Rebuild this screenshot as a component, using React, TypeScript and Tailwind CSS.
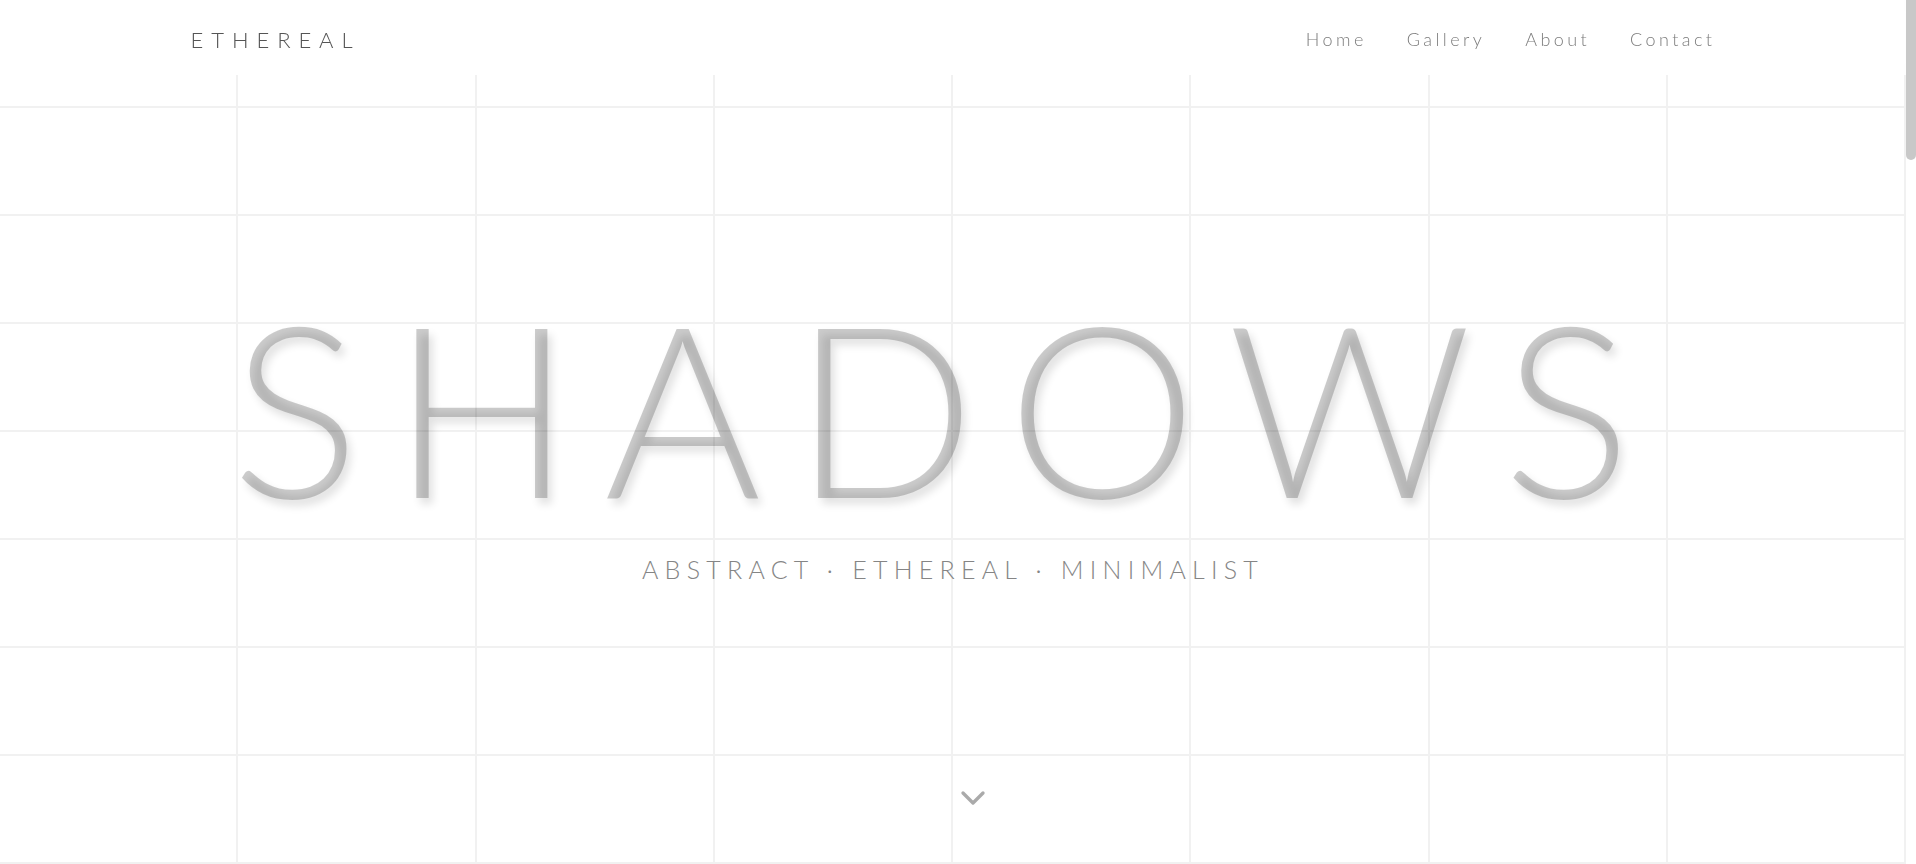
import { ChevronDown } from "lucide-react";

const navItems = ["Home", "Gallery", "About", "Contact"];

function GridLines() {
  return (
    <div className="pointer-events-none absolute inset-0 grid grid-cols-8 grid-rows-8">
      {Array.from({ length: 64 }).map((_, i) => (
        <div key={i} className="border-r-2 border-b-2 border-[#f1f1f1]" />
      ))}
    </div>
  );
}

function Header() {
  return (
    <header className="fixed top-0 left-0 right-[10px] z-20 h-[75px] bg-white/90 backdrop-blur-sm">
      <div className="flex h-full items-center justify-between px-[10%] pt-[3px]">
        <a href="#" className="text-[22px] font-light tracking-[0.36em] text-[#555]">
          ETHEREAL
        </a>
        <nav className="flex items-center gap-10">
          {navItems.map((item) => (
            <a
              key={item}
              href={`#${item.toLowerCase()}`}
              className="text-[18px] font-light tracking-[0.19em] text-[#7c7c7c] hover:text-[#444] transition-colors"
            >
              {item}
            </a>
          ))}
        </nav>
      </div>
    </header>
  );
}

function Hero() {
  return (
    <section id="home" className="relative h-screen overflow-hidden">
      <GridLines />
      <div className="relative z-10 flex h-full flex-col items-center justify-center pt-[10px]">
        <h1 className="mr-3 text-[240px] leading-none font-light tracking-[0.132em] text-black/20 [text-shadow:4px_6px_9px_rgba(0,0,0,0.12)]">
          SHADOWS
        </h1>
        <p className="mt-[26px] text-[25px] font-light tracking-[0.25em] text-[#858585]">
          ABSTRACT · ETHEREAL · MINIMALIST
        </p>
      </div>
      <div className="absolute left-1/2 bottom-[46px] z-10 text-[#aaa]">
        <ChevronDown size={40} strokeWidth={2} />
      </div>
    </section>
  );
}

// thin scroll track drawn on the right, the page itself hides the native bar
function ScrollTrack() {
  return (
    <div className="w-[10px] shrink-0 bg-white">
      <div className="h-[160px] rounded-b-[5px] bg-[#c8c8c8]" />
    </div>
  );
}

export default function App() {
  return (
    <div className="flex h-screen bg-white font-['Lato','Liberation_Sans',sans-serif]">
      <div className="h-full flex-1 overflow-y-auto [scrollbar-width:none] [&::-webkit-scrollbar]:hidden">
        <Header />
        <Hero />
      </div>
      <ScrollTrack />
    </div>
  );
}
